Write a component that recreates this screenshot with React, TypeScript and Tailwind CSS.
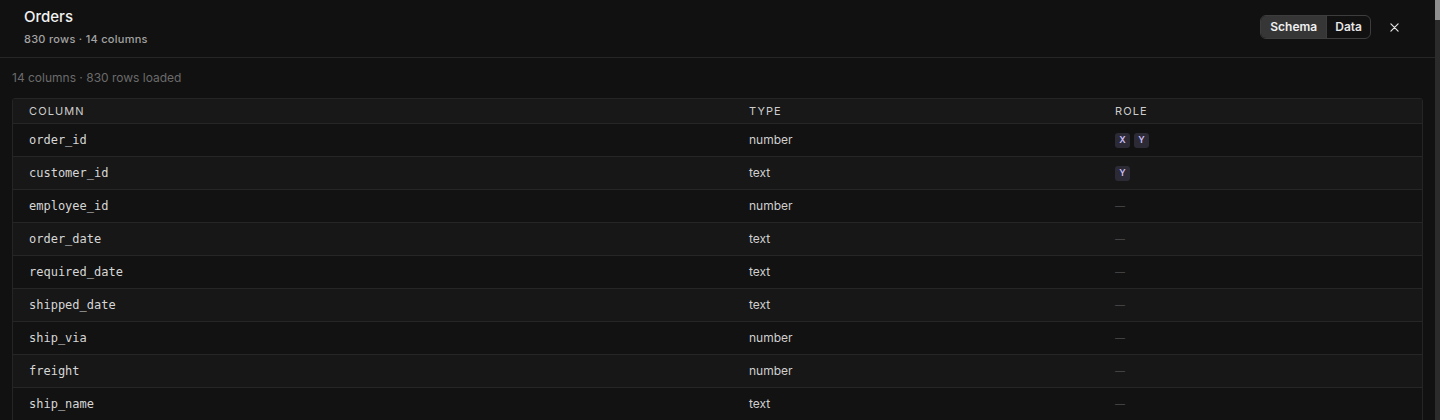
import React from "react";

type Row = { name: string; type: string; roles: string[] };

const rows: Row[] = [
  { name: "order_id", type: "number", roles: ["X", "Y"] },
  { name: "customer_id", type: "text", roles: ["Y"] },
  { name: "employee_id", type: "number", roles: [] },
  { name: "order_date", type: "text", roles: [] },
  { name: "required_date", type: "text", roles: [] },
  { name: "shipped_date", type: "text", roles: [] },
  { name: "ship_via", type: "number", roles: [] },
  { name: "freight", type: "number", roles: [] },
  { name: "ship_name", type: "text", roles: [] },
  { name: "ship_address", type: "text", roles: [] },
  { name: "ship_city", type: "text", roles: [] },
  { name: "ship_region", type: "text", roles: [] },
  { name: "ship_postal_code", type: "text", roles: [] },
  { name: "ship_country", type: "text", roles: [] },
];

const sans = "font-['Inter','Liberation_Sans',sans-serif]";
const mono = "font-['DejaVu_Sans_Mono','Liberation_Mono',monospace]";

export default function App() {
  return (
    <div className={`flex h-[420px] w-full overflow-hidden bg-[#111111] ${sans}`}>
      <div className="flex min-w-0 flex-1 flex-col">
        {/* Header */}
        <div className="flex items-start justify-between border-b border-[#262626] pl-6 pr-[36px] pt-[7px] pb-[10px]">
          <div className="flex flex-col">
            <div className="text-[15px] font-medium leading-5 text-[#f2f2f2]">Orders</div>
            <div className="mt-1 text-[11px] font-medium leading-4 tracking-[0.025em] text-[#a3a3a3]">
              830 rows · 14 columns
            </div>
          </div>
          <div className="mt-[8px] flex items-center gap-[18px]">
            <div className="flex h-[24px] overflow-hidden rounded-[6px] border border-[#3d3d3d] text-[12px] font-semibold">
              <button className="bg-[#363636] px-[9px] text-[#f0f0f0]">Schema</button>
              <button className="border-l border-[#3d3d3d] px-[8px] text-[#e6e6e6]">Data</button>
            </div>
            <button className="flex h-4 w-[10px] items-center justify-center text-[#e6e6e6]">
              <svg width="9" height="9" viewBox="0 0 10 10" fill="none" stroke="currentColor" strokeWidth="1.3" strokeLinecap="round">
                <path d="M1 1L9 9M9 1L1 9" />
              </svg>
            </button>
          </div>
        </div>

        {/* Body */}
        <div className="flex flex-col px-3 pt-3">
          <div className="mb-3 text-[12px] leading-4 text-[#6b6b6b]">14 columns · 830 rows loaded</div>
          <div className="overflow-hidden rounded-t-[3px] border border-[#252525]">
            <div className="grid h-[24px] grid-cols-[720px_366px_1fr] items-center bg-[#181818] text-[11px] font-normal uppercase tracking-[0.1em] text-[#cccccc]">
              <div className="pl-4">Column</div>
              <div className="pl-4">Type</div>
              <div className="pl-4">Role</div>
            </div>
            {rows.map((r, i) => (
              <div
                key={r.name}
                className={`grid h-[33px] grid-cols-[720px_366px_1fr] items-center border-t border-[#262626] ${
                  i % 2 === 0 ? "bg-[#121212]" : "bg-[#171717]"
                }`}
              >
                <div className={`pl-4 text-[12px] text-[#d6d6d6] ${mono}`}>{r.name}</div>
                <div className="pl-4 text-[12px] text-[#cfcfcf]">{r.type}</div>
                <div className="flex items-center gap-1 pl-4">
                  {r.roles.length ? (
                    r.roles.map((role) => (
                      <span
                        key={role}
                        className="flex h-[15px] w-[15px] items-center justify-center rounded-[3px] bg-[#2c2a35] text-[9px] font-semibold text-[#cbbdf6]"
                      >
                        {role}
                      </span>
                    ))
                  ) : (
                    <span className="text-[10px] leading-none text-[#4d4d4d]">—</span>
                  )}
                </div>
              </div>
            ))}
          </div>
        </div>
      </div>
      {/* scrollbar */}
      <div className="flex w-[5px] flex-col bg-[#2b2b2b]">
        <div className="h-[20px] w-full bg-[#8f8f8f]" />
      </div>
    </div>
  );
}
